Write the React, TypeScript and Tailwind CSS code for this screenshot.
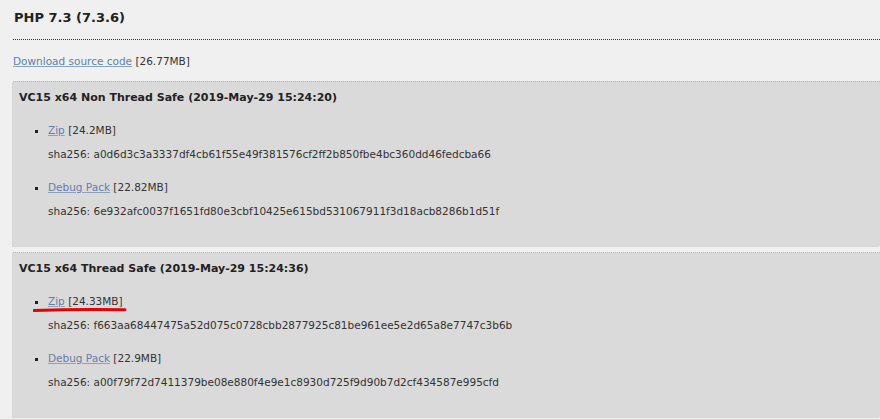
import React from 'react';

interface Build {
  title: string;
  files: { label: string; size: string; sha: string; marked?: boolean }[];
}

const builds: Build[] = [
  {
    title: 'VC15 x64 Non Thread Safe (2019-May-29 15:24:20)',
    files: [
      { label: 'Zip', size: '[24.2MB]', sha: 'a0d6d3c3a3337df4cb61f55e49f381576cf2ff2b850fbe4bc360dd46fedcba66' },
      { label: 'Debug Pack', size: '[22.82MB]', sha: '6e932afc0037f1651fd80e3cbf10425e615bd531067911f3d18acb8286b1d51f' },
    ],
  },
  {
    title: 'VC15 x64 Thread Safe (2019-May-29 15:24:36)',
    files: [
      { label: 'Zip', size: '[24.33MB]', sha: 'f663aa68447475a52d075c0728cbb2877925c81be961ee5e2d65a8e7747c3b6b', marked: true },
      { label: 'Debug Pack', size: '[22.9MB]', sha: 'a00f79f72d7411379be08e880f4e9e1c8930d725f9d90b7d2cf434587e995cfd' },
    ],
  },
];

const font = { fontFamily: '"DejaVu Sans", Verdana, sans-serif' };

const BuildBox: React.FC<{ build: Build }> = ({ build }) => (
  <div className="h-[165px] bg-[#dadada] border-t border-dotted border-[#bdbdbd] shadow-[-1px_1px_0_#d6d6d6] pl-[6px] pt-[9px]">
    <h4 className="text-[11px] leading-[14px] font-bold text-[#222]">{build.title}</h4>
    <ul className="list-[square] pl-[29px] mt-[18px] marker:text-[#222]">
      {build.files.map((f, i) => (
        <li key={i} className={`relative text-[10.5px] leading-[14px] text-[#333] ${i > 0 ? 'mt-[19px]' : ''}`}>
          <a href="#" className="text-[#5f80ab] underline decoration-[#8aa2c2]">{f.label}</a> {f.size}
          {f.marked && (
            <svg className="absolute left-[-15px] top-[13px]" width="94" height="6" viewBox="0 0 94 6">
              <path d="M1 3.5 C 30 2.5, 60 2.2, 92 2.8" stroke="#e30000" strokeWidth="3" strokeLinecap="round" fill="none" />
            </svg>
          )}
          <div className="mt-[10px]">sha256: {f.sha}</div>
        </li>
      ))}
    </ul>
  </div>
);

export default function App() {
  return (
    <div className="w-[880px] h-[419px] overflow-hidden bg-[#f0f0f0] pl-[13px]" style={font}>
      <h3 className="pt-[10px] pl-[1px] text-[13px] leading-[16px] font-bold text-[#222]">PHP 7.3 (7.3.6)</h3>
      <div className="mt-[13px] border-b border-dotted border-[#333]" />
      <p className="mt-[14px] text-[10.5px] leading-[14px] text-[#333]">
        <a href="#" className="text-[#5f80ab] underline decoration-[#8aa2c2]">Download source code</a> [26.77MB]
      </p>
      <div className="mt-[13px] flex flex-col gap-[6px]">
        {builds.map((b, i) => (
          <BuildBox key={i} build={b} />
        ))}
      </div>
    </div>
  );
}
